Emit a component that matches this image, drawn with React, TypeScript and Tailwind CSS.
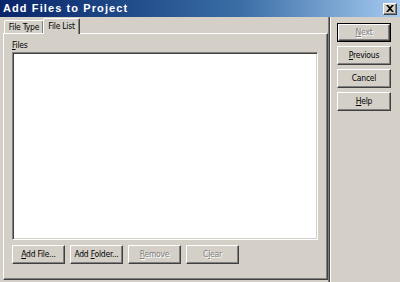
import clsx from "clsx";
import type { ReactNode } from "react";

type BtnProps = {
  children: ReactNode;
  disabled?: boolean;
  isDefault?: boolean;
  className?: string;
};

const Btn = ({ children, disabled, isDefault, className }: BtnProps) => {
  const face = (
    <div
      className={clsx(
        "flex-1 flex items-center justify-center whitespace-nowrap bg-[#d4d0c8] border border-t-white border-l-white border-r-[#404040] border-b-[#404040] shadow-[inset_-1px_-1px_0_#808080]",
        disabled ? "text-[#808080] [text-shadow:1px_1px_0_#ffffff]" : "text-black"
      )}
    >
      {children}
    </div>
  );

  if (isDefault) {
    return (
      <div className={clsx("flex border border-black", className)}>{face}</div>
    );
  }

  return <div className={clsx("flex", className)}>{face}</div>;
};

export default function App() {
  return (
    <div className="w-[400px] h-[282px] bg-[#d4d0c8] flex flex-col overflow-hidden font-['DejaVu_Sans_Condensed','Liberation_Sans',sans-serif] text-[8.5px] tracking-[-0.25px] leading-[13px] text-black select-none">
      {/* Title bar */}
      <div className="h-[17px] shrink-0 flex items-center justify-between pl-[3px] pr-[3px] bg-gradient-to-r from-[#0a246a] via-[#3a6ea5] via-60% to-[#a6caf0]">
        <span className="font-['Liberation_Sans',Arial,sans-serif] text-white font-bold text-[11px] tracking-[1.1px] whitespace-nowrap">
          Add Files to Project
        </span>
        <div className="w-[14px] h-[12px] bg-[#d4d0c8] border border-t-white border-l-white border-r-[#404040] border-b-[#404040] shadow-[inset_-1px_-1px_0_#808080] flex items-center justify-center">
          <svg width="8" height="7" viewBox="0 0 8 7">
            <path d="M0 0h2l2 2 2-2h2L5 3.5 8 7H6L4 5 2 7H0l3-3.5z" fill="#000" />
          </svg>
        </div>
      </div>

      <div className="flex-1 flex min-h-0">
        {/* Left side: tabs */}
        <div className="w-[328px] shrink-0 flex flex-col pl-[3px] pt-px pb-[2px]">
          <div className="h-[15px] flex items-end pl-px whitespace-nowrap">
            <div className="h-[13px] w-[40px] flex items-center justify-center border-t border-l border-white border-r border-r-[#404040] shadow-[inset_-1px_0_0_#808080] rounded-tl-[2px] rounded-tr-[2px]">
              File Type
            </div>
            <div className="relative z-10 -mb-px -ml-px h-[16px] w-[37px] flex items-start justify-center pt-[1px] bg-[#d4d0c8] border-t border-l border-white border-r border-r-[#404040] shadow-[inset_-1px_0_0_#808080] rounded-tl-[2px] rounded-tr-[2px]">
              File List
            </div>
          </div>

          <div className="flex-1 flex flex-col border border-t-white border-l-white border-r-[#404040] border-b-[#404040] shadow-[inset_-1px_-1px_0_#808080] pl-[8px] pt-[5px]">
            <div className="h-[13px]">
              <u>F</u>iles
            </div>
            <div className="w-[306px] h-[188px] bg-white border border-t-[#808080] border-l-[#808080] border-r-white border-b-white shadow-[inset_1px_1px_0_#404040,inset_-1px_-1px_0_#d4d0c8]" />
            <div className="flex gap-[5px] mt-[5px]">
              <Btn className="w-[53px] h-[19px]">
                <span>
                  <u>A</u>dd File...
                </span>
              </Btn>
              <Btn className="w-[53px] h-[19px]">
                <span>
                  Add <u>F</u>older...
                </span>
              </Btn>
              <Btn className="w-[53px] h-[19px]" disabled>
                <span>
                  <u>R</u>emove
                </span>
              </Btn>
              <Btn className="w-[53px] h-[19px]" disabled>
                <span>
                  C<u>l</u>ear
                </span>
              </Btn>
            </div>
          </div>
        </div>

        {/* Separator */}
        <div className="w-px bg-[#808080]" />
        <div className="w-px bg-[#404040]" />
        <div className="w-px bg-white" />

        {/* Right side: wizard buttons */}
        <div className="flex-1 flex flex-col gap-[4px] pl-[6px] pt-[6px]">
          <Btn className="w-[54px] h-[19px]" isDefault disabled>
            <span>
              <u>N</u>ext
            </span>
          </Btn>
          <Btn className="w-[54px] h-[19px]">
            <span>
              <u>P</u>revious
            </span>
          </Btn>
          <Btn className="w-[54px] h-[19px]">
            <span>Cancel</span>
          </Btn>
          <Btn className="w-[54px] h-[19px]">
            <span>
              <u>H</u>elp
            </span>
          </Btn>
        </div>
      </div>
    </div>
  );
}
